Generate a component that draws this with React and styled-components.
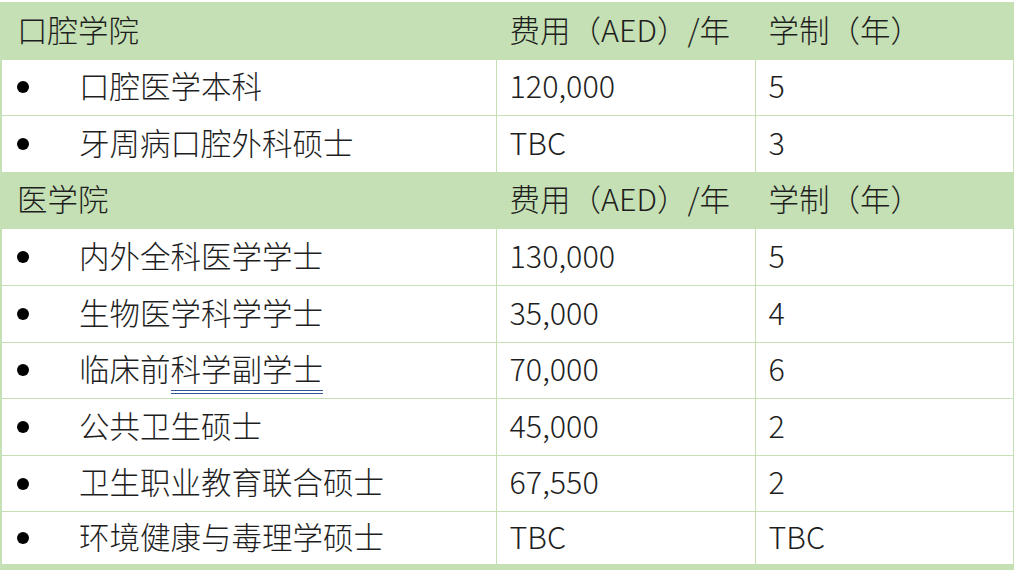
import React from "react";
import styled, { createGlobalStyle } from "styled-components";

const GlobalStyle = createGlobalStyle`
  html, body {
    margin: 0;
    padding: 0;
    background: #ffffff;
  }
  body {
    font-family: "Noto Sans CJK SC", "Noto Sans", sans-serif;
  }
`;

const StyledPage = styled.div`
  width: 1015px;
  height: 570px;
  padding-top: 2px;
  box-sizing: border-box;
  overflow: hidden;
  background: #ffffff;
`;

const StyledTable = styled.table`
  width: 1012px;
  border-collapse: collapse;
  table-layout: fixed;
  border-bottom: 8px solid #c5e0b4;
`;

const StyledRow = styled.tr`
  height: 56.6px;
  background: ${p => (p.$head ? "#c5e0b4" : "#ffffff")};
`;

const StyledCell = styled.td`
  padding: 0 0 4px ${p => p.$pad || 13}px;
  border: 1px solid #c5e0b4;
  border-left: ${p => (p.$first ? "2px solid #c5e0b4" : "1px solid #c5e0b4")};
  font-size: 30.5px;
  font-weight: 300;
  color: #1e1e1e;
  white-space: nowrap;
  vertical-align: middle;
  line-height: 1;
`;

const StyledItem = styled.div`
  display: flex;
  align-items: center;
`;

const StyledBullet = styled.span`
  width: 12px;
  height: 12px;
  border-radius: 50%;
  background: #000000;
  margin: 4px 50px 0 0;
  flex: none;
`;

const StyledMarked = styled.span`
  border-bottom: 4px double #2f5597;
  padding-bottom: 0;
`;

const schools = [
  {
    name: "口腔学院",
    rows: [
      { name: "口腔医学本科", fee: "120,000", years: "5" },
      { name: "牙周病口腔外科硕士", fee: "TBC", years: "3" }
    ]
  },
  {
    name: "医学院",
    rows: [
      { name: "内外全科医学学士", fee: "130,000", years: "5" },
      { name: "生物医学科学学士", fee: "35,000", years: "4" },
      { name: "临床前", marked: "科学副学士", fee: "70,000", years: "6" },
      { name: "公共卫生硕士", fee: "45,000", years: "2" },
      { name: "卫生职业教育联合硕士", fee: "67,550", years: "2" },
      { name: "环境健康与毒理学硕士", fee: "TBC", years: "TBC" }
    ]
  }
];

export default function App() {
  return (
    <StyledPage>
      <GlobalStyle />
      <StyledTable>
        <colgroup>
          <col style={{ width: 495 }} />
          <col style={{ width: 259 }} />
          <col style={{ width: 258 }} />
        </colgroup>
        <tbody>
          {schools.map(school => (
            <React.Fragment key={school.name}>
              <StyledRow $head>
                <StyledCell $first $pad={15}>{school.name}</StyledCell>
                <StyledCell>费用（AED）/年</StyledCell>
                <StyledCell>学制（年）</StyledCell>
              </StyledRow>
              {school.rows.map(row => (
                <StyledRow key={row.name}>
                  <StyledCell $first $pad={15}>
                    <StyledItem>
                      <StyledBullet />
                      <span>
                        {row.name}
                        {row.marked && <StyledMarked>{row.marked}</StyledMarked>}
                      </span>
                    </StyledItem>
                  </StyledCell>
                  <StyledCell>{row.fee}</StyledCell>
                  <StyledCell>{row.years}</StyledCell>
                </StyledRow>
              ))}
            </React.Fragment>
          ))}
        </tbody>
      </StyledTable>
    </StyledPage>
  );
}
